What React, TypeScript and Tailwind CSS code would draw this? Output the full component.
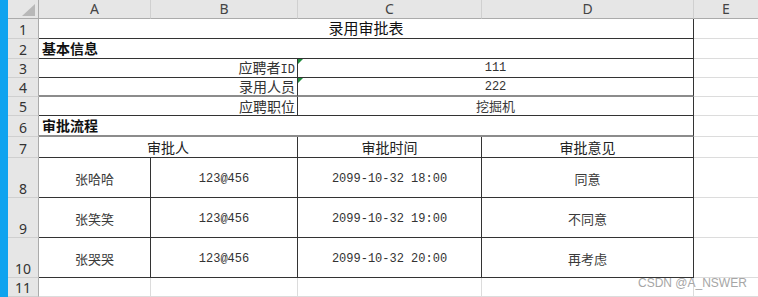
import type { ReactNode } from 'react'

// cell helpers for the spreadsheet grid
const sans = "font-['Noto_Sans_CJK_SC','Noto_Sans',sans-serif]"

function ColHead({ label, last }: { label: string; last?: boolean }) {
  return (
    <div
      className={
        last
          ? "bg-[#e6e6e6] border-b border-b-[#ababab] flex items-center justify-center text-[14px] leading-none text-[#444] font-['Noto_Sans',sans-serif]"
          : "bg-[#e6e6e6] border-b border-r border-b-[#ababab] border-r-[#d0d0d0] flex items-center justify-center text-[14px] leading-none text-[#444] font-['Noto_Sans',sans-serif]"
      }
    >
      {label}
    </div>
  )
}

function RowHead({ n }: { n: string }) {
  return (
    <div className="bg-[#e6e6e6] border-b border-r border-b-[#cfcfcf] border-r-[#ababab] flex items-end justify-center pb-[1px] text-[14px] leading-none text-[#333] font-['Noto_Sans',sans-serif]">
      {n}
    </div>
  )
}

function Mono({ children }: { children: ReactNode }) {
  return <span className="font-['Liberation_Mono',monospace] text-[12px] whitespace-pre">{children}</span>
}

function Plain({ children }: { children: ReactNode }) {
  return <span className={`${sans} text-[13px] text-[#3a3a3a]`}>{children}</span>
}

function Empty() {
  return <div className="bg-white border-b border-b-[#dcdcdc]" />
}

const approvals = [
  { n: '8', name: '张哈哈', id: '123@456', time: '2099-10-32 18:00', opinion: '同意' },
  { n: '9', name: '张笑笑', id: '123@456', time: '2099-10-32 19:00', opinion: '不同意' },
  { n: '10', name: '张哭哭', id: '123@456', time: '2099-10-32 20:00', opinion: '再考虑' },
]

const basics = [
  { n: '3', label: <span>应聘者<Mono>ID</Mono></span>, value: <Mono>111</Mono>, mark: true, thick: false },
  { n: '4', label: <span>录用人员</span>, value: <Mono>222</Mono>, mark: true, thick: true },
  { n: '5', label: <span>应聘职位</span>, value: <Plain>挖掘机</Plain>, mark: false, thick: false },
]

export default function App() {
  return (
    <div className="relative flex w-[758px] h-[297px] overflow-hidden bg-white">
      <div className="w-2 shrink-0 bg-[#0fa3ef]" />
      <div className="flex-1 grid grid-cols-[31px_112px_147px_184px_212px_1fr] grid-rows-[19px_20px_20px_19px_19px_19px_21px_21px_40px_40px_40px_19px]">
        {/* column headers */}
        <div className="bg-[#e6e6e6] border-b border-r border-[#ababab] flex items-end justify-end pr-[3px] pb-[2px]">
          <svg width="13" height="12" viewBox="0 0 13 12">
            <polygon points="13,0 13,12 0,12" fill="#b8b8b8" />
          </svg>
        </div>
        <ColHead label="A" />
        <ColHead label="B" />
        <ColHead label="C" />
        <ColHead label="D" />
        <ColHead label="E" last />

        {/* row 1: title */}
        <RowHead n="1" />
        <div className={`col-span-4 border-b border-r border-[#333] flex items-center justify-center ${sans} text-[15px] text-[#111]`}>
          录用审批表
        </div>
        <Empty />

        {/* row 2 */}
        <RowHead n="2" />
        <div className={`col-span-4 border-b border-r border-[#333] flex items-center pl-[3px] ${sans} text-[14px] font-bold text-[#111]`}>
          基本信息
        </div>
        <Empty />

        {/* rows 3-5 */}
        {basics.map((b) => (
          <div key={b.n} className="contents">
            <RowHead n={b.n} />
            <div
              className={
                b.thick
                  ? `col-span-2 border-b-2 border-r border-b-[#8c8c8c] border-r-[#333] flex items-center justify-end pr-[2px] ${sans} text-[14px] text-[#333]`
                  : `col-span-2 border-b border-r border-[#333] flex items-center justify-end pr-[2px] ${sans} text-[14px] text-[#333]`
              }
            >
              {b.label}
            </div>
            <div
              className={
                b.thick
                  ? 'relative col-span-2 border-b-2 border-r border-b-[#8c8c8c] border-r-[#333] flex items-center justify-center text-[#333]'
                  : 'relative col-span-2 border-b border-r border-[#333] flex items-center justify-center text-[#333]'
              }
            >
              {b.mark && (
                <span className="absolute left-0 top-0 w-0 h-0 border-t-[5px] border-r-[5px] border-t-[#1f8b3c] border-r-transparent" />
              )}
              {b.value}
            </div>
            <Empty />
          </div>
        ))}

        {/* row 6 */}
        <RowHead n="6" />
        <div className={`col-span-4 border-b-2 border-r border-b-[#8c8c8c] border-r-[#333] flex items-center pl-[3px] ${sans} text-[14px] font-bold text-[#111]`}>
          审批流程
        </div>
        <Empty />

        {/* row 7: table header */}
        <RowHead n="7" />
        <div className={`col-span-2 border-b border-r border-[#333] flex items-center justify-center ${sans} text-[14px] text-[#222]`}>
          审批人
        </div>
        <div className={`border-b border-r border-[#333] flex items-center justify-center ${sans} text-[14px] text-[#222]`}>
          审批时间
        </div>
        <div className={`border-b border-r border-[#333] flex items-center justify-center ${sans} text-[14px] text-[#222]`}>
          审批意见
        </div>
        <Empty />

        {/* rows 8-10 */}
        {approvals.map((a) => (
          <div key={a.n} className="contents">
            <RowHead n={a.n} />
            <div className="border-b border-r border-[#333] flex items-center justify-center pt-[3px]">
              <Plain>{a.name}</Plain>
            </div>
            <div className="border-b border-r border-[#333] flex items-center justify-center pt-[3px] text-[#333]">
              <Mono>{a.id}</Mono>
            </div>
            <div className="border-b border-r border-[#333] flex items-center justify-center pt-[3px] text-[#333]">
              <Mono>{a.time}</Mono>
            </div>
            <div className="border-b border-r border-[#333] flex items-center justify-center pt-[3px]">
              <Plain>{a.opinion}</Plain>
            </div>
            <Empty />
          </div>
        ))}

        {/* row 11 */}
        <RowHead n="11" />
        <div className="border-b border-r border-[#dcdcdc]" />
        <div className="border-b border-r border-[#dcdcdc]" />
        <div className="border-b border-r border-[#dcdcdc]" />
        <div className="border-b border-r border-[#dcdcdc]" />
        <Empty />
      </div>

      <span className="absolute left-[638px] top-[277px] text-[12px] leading-none text-[#a6a6a6] font-['Liberation_Sans',sans-serif]">
        CSDN @A_NSWER
      </span>
    </div>
  )
}
